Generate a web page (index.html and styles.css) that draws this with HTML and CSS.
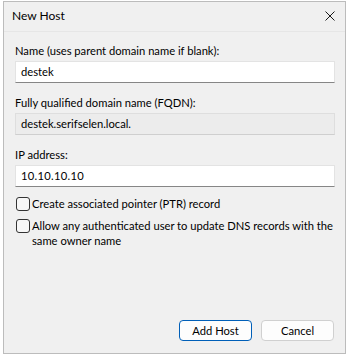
FILE: index.html
```html
<!DOCTYPE html>
<html>
<head>
<meta charset="utf-8">
<link rel="stylesheet" href="styles.css">
</head>
<body>
<div class="desk"></div>
<div class="window">
  <div class="titlebar">
    <span class="title">New Host</span>
    <svg class="close" width="10" height="10" viewBox="0 0 10 10"><path d="M0.5 0.5 L9.5 9.5 M9.5 0.5 L0.5 9.5" stroke="#1a1a1a" stroke-width="1" fill="none"/></svg>
  </div>
  <div class="content">
    <label class="lbl l1">Name (uses parent domain name if blank):</label>
    <div class="field">destek</div>
    <label class="lbl">Fully qualified domain name (FQDN):</label>
    <div class="field ro">destek.serifselen.local.</div>
    <label class="lbl">IP address:</label>
    <div class="field ip">10.10.10.10</div>
    <div class="check c1"><span class="box"></span><span class="ctext">Create associated pointer (PTR) record</span></div>
    <div class="check c2"><span class="box"></span><span class="ctext">Allow any authenticated user to update DNS records with the same owner name</span></div>
    <div class="spacer"></div>
    <div class="buttons">
      <div class="btn default">Add Host</div>
      <div class="btn">Cancel</div>
    </div>
  </div>
</div>
</body>
</html>
```
FILE: styles.css
```css
html, body { margin: 0; padding: 0; background: #fff; }
body { width: 350px; height: 358px; overflow: hidden; font-family: Lato, "Liberation Sans", sans-serif; font-size: 11.2px; color: #000; }
.desk { height: 1px; }
.window {
  margin-left: 3px; width: 341px; height: 351px;
  background: #f0f0f0; border: 1px solid #bcbcbc;
  display: flex; flex-direction: column;
}
.titlebar { height: 29px; display: flex; align-items: center; justify-content: space-between; padding: 0 10px 0 8px; border-bottom: 1px solid #e6e6e6; }
.title { font-size: 12px; position: relative; top: -1px; }
.close { display: block; margin-top: -1px; }
.content { flex: 1; display: flex; flex-direction: column; padding: 11px 10px 12px 11px; }
.lbl { display: block; line-height: 15px; height: 15px; }
.field {
  margin-top: 3px; height: 20px; line-height: 20px; padding: 0 5px;
  background: #fff; border: 1px solid #e3e3e3; border-bottom-color: #868686;
  margin-bottom: 12px;
}
.field.ro { background: #ececec; border-color: #dedede; border-bottom-color: #cfcfcf; }
.field.ip { letter-spacing: 0.3px; }
.check { display: flex; align-items: flex-start; line-height: 15px; }
.c1 { margin-top: -3px; }
.c2 { margin-top: 7px; }
.box { width: 12px; height: 12px; border: 1px solid #333; border-radius: 3px; margin: 1px 2px 0 1px; background: #f7f7f7; flex: none; }
.spacer { flex: 1; }
.buttons { display: flex; justify-content: flex-end; gap: 9px; padding-right: 1px; }
.btn { width: 71px; height: 19px; line-height: 19px; text-align: center; background: #fdfdfd; border: 1px solid #d0d0d0; border-radius: 4px; }
.btn.default { border: 1px solid #005fb8; box-shadow: inset 0 0 0 1px #fdfdfd; }
```
